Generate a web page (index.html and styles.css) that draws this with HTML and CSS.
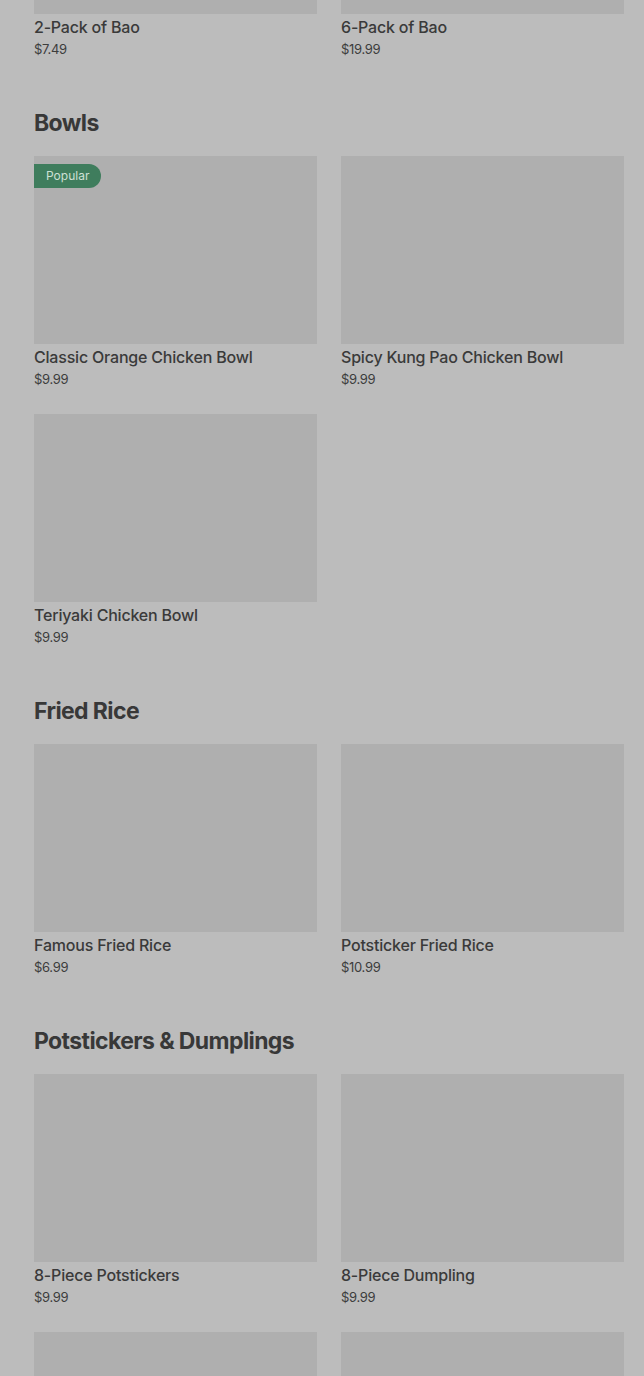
FILE: index.html
```html
<!DOCTYPE html>
<html lang="en">
<head>
<meta charset="utf-8">
<title>Menu</title>
<link rel="stylesheet" href="styles.css">
</head>
<body>
<main class="menu">
  <section class="section section-first">
    <div class="grid">
      <div class="card"><div class="thumb"></div><div class="title">2-Pack of Bao</div><div class="price">$7.49</div></div>
      <div class="card"><div class="thumb"></div><div class="title">6-Pack of Bao</div><div class="price">$19.99</div></div>
    </div>
  </section>
  <section class="section">
    <h2 class="heading">Bowls</h2>
    <div class="grid">
      <div class="card"><div class="thumb"><span class="badge">Popular</span></div><div class="title">Classic Orange Chicken Bowl</div><div class="price">$9.99</div></div>
      <div class="card"><div class="thumb"></div><div class="title">Spicy Kung Pao Chicken Bowl</div><div class="price">$9.99</div></div>
      <div class="card"><div class="thumb"></div><div class="title">Teriyaki Chicken Bowl</div><div class="price">$9.99</div></div>
    </div>
  </section>
  <section class="section">
    <h2 class="heading">Fried Rice</h2>
    <div class="grid">
      <div class="card"><div class="thumb"></div><div class="title">Famous Fried Rice</div><div class="price">$6.99</div></div>
      <div class="card"><div class="thumb"></div><div class="title">Potsticker Fried Rice</div><div class="price">$10.99</div></div>
    </div>
  </section>
  <section class="section">
    <h2 class="heading">Potstickers &amp; Dumplings</h2>
    <div class="grid">
      <div class="card"><div class="thumb"></div><div class="title">8-Piece Potstickers</div><div class="price">$9.99</div></div>
      <div class="card"><div class="thumb"></div><div class="title">8-Piece Dumpling</div><div class="price">$9.99</div></div>
      <div class="card"><div class="thumb"></div><div class="title">&nbsp;</div><div class="price">&nbsp;</div></div>
      <div class="card"><div class="thumb"></div><div class="title">&nbsp;</div><div class="price">&nbsp;</div></div>
    </div>
  </section>
</main>
</body>
</html>
```

FILE: styles.css
```css
html, body {
  margin: 0;
  padding: 0;
  background: #bcbcbc;
  overflow: hidden;
}
body {
  font-family: "Inter", "Liberation Sans", sans-serif;
  color: #393939;
  height: 1376px;
}
.menu {
  padding: 0 20px 0 34px;
  margin-top: -174px;
}
.section + .section {
  margin-top: 46px;
}
.heading {
  margin: 0 0 17px;
  font-size: 23px;
  line-height: 32px;
  font-weight: 700;
  letter-spacing: -0.6px;
  color: #383838;
}
.grid {
  display: grid;
  grid-template-columns: 283px 283px;
  column-gap: 24px;
  row-gap: 23px;
}
.thumb {
  position: relative;
  height: 188px;
  background: #afafaf;
}
.badge {
  position: absolute;
  left: 0;
  top: 8px;
  height: 24px;
  line-height: 24px;
  padding: 0 12px;
  font-size: 12px;
  color: #cde0d5;
  background: #3f7d5d;
  border-radius: 0 12px 12px 0;
}
.title {
  margin-top: 2px;
  font-size: 16px;
  line-height: 22px;
  font-weight: 500;
  color: #3a3a3a;
  letter-spacing: -0.2px;
}
.price {
  margin-top: 2px;
  font-size: 13px;
  line-height: 19px;
  padding-bottom: 2px;
  color: #3d3d3d;
  letter-spacing: -0.3px;
}
```
